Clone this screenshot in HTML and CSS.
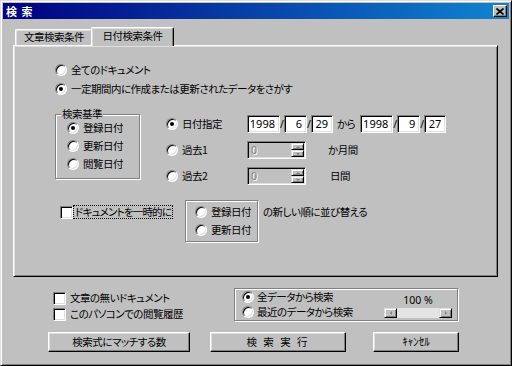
FILE: index.html
```html
<!DOCTYPE html>
<html lang="ja">
<head>
<meta charset="utf-8">
<title>検索</title>
<link rel="stylesheet" href="styles.css">
</head>
<body>
<div class="window">
  <div class="titlebar">
    <span class="title">検 索</span>
    <span class="close"><svg width="8" height="7" viewBox="0 0 8 7"><path d="M0.5 0.5L7.5 6.5M7.5 0.5L0.5 6.5" stroke="#000" stroke-width="1.7" fill="none"/></svg></span>
  </div>
  <div class="body">
    <div class="tabs">
      <div class="tab">文章検索条件</div>
      <div class="tab active">日付検索条件</div>
    </div>
    <div class="panel">
      <div class="opt r1"><span class="radio"></span>全てのドキュメント</div>
      <div class="opt r2"><span class="radio on"></span>一定期間内に作成または更新されたデータをさがす</div>
      <div class="criteria">
        <fieldset class="group basis">
          <legend>検索基準</legend>
          <div class="optlist">
            <div class="opt"><span class="radio on"></span>登録日付</div>
            <div class="opt"><span class="radio"></span>更新日付</div>
            <div class="opt"><span class="radio"></span>閲覧日付</div>
          </div>
        </fieldset>
        <div class="dates">
          <div class="opt"><span class="radio on"></span>日付指定</div>
          <div class="fields">
            <span class="edit w4">1998</span><span class="slash">/</span><span class="edit w2">6</span><span class="slash">/</span><span class="edit w2b">29</span>
            <span class="kara">から</span>
            <span class="edit w4">1998</span><span class="slash">/</span><span class="edit w2">9</span><span class="slash">/</span><span class="edit w2b">27</span>
          </div>
          <div class="opt"><span class="radio"></span>過去1</div>
          <div class="fields">
            <span class="spin"><span class="spin-val">0</span><span class="spin-btns"><span class="sb up"></span><span class="sb down"></span></span></span>
            <span class="unit">か月間</span>
          </div>
          <div class="opt"><span class="radio"></span>過去2</div>
          <div class="fields">
            <span class="spin"><span class="spin-val">0</span><span class="spin-btns"><span class="sb up"></span><span class="sb down"></span></span></span>
            <span class="unit unit2">日間</span>
          </div>
        </div>
      </div>
      <div class="sortrow">
        <div class="opt tmp"><span class="check"></span><span class="focus">ドキュメントを一時的に</span></div>
        <div class="group sortgroup">
          <div class="opt"><span class="radio"></span>登録日付</div>
          <div class="opt"><span class="radio"></span>更新日付</div>
        </div>
        <div class="sorttext">の新しい順に並び替える</div>
      </div>
    </div>
    <div class="bottom">
      <div class="checks">
        <div class="opt"><span class="check"></span>文章の無いドキュメント</div>
        <div class="opt"><span class="check"></span>このパソコンでの閲覧履歴</div>
      </div>
      <div class="group scope">
        <div class="scope-opts">
          <div class="opt"><span class="radio on"></span>全データから検索</div>
          <div class="opt"><span class="radio"></span>最近のデータから検索</div>
        </div>
        <div class="scope-right">
          <div class="pct">100 %</div>
          <div class="scroll"><span class="sbtn left"></span><span class="trough"></span><span class="sbtn right"></span></div>
        </div>
      </div>
    </div>
    <div class="buttons">
      <div class="btn b1">検索式にマッチする数</div>
      <div class="btn b2">検 索 実 行</div>
      <div class="btn b3">ｷｬﾝｾﾙ</div>
    </div>
  </div>
</div>
</body>
</html>
```
FILE: styles.css
```css
* { box-sizing: border-box; margin: 0; padding: 0; }
body {
  margin: 0;
  background: #c0c0c0;
  font-family: "Noto Sans CJK JP", "Noto Sans", sans-serif;
  font-size: 10.5px;
  letter-spacing: -0.5px;
  line-height: 14px;
  color: #000;
  font-feature-settings: "palt";
}
.window {
  width: 512px;
  height: 366px;
  background: #c0c0c0;
  border: 1px solid;
  border-color: #dfdfdf #000 #000 #dfdfdf;
  box-shadow: inset 1px 1px #fff, inset -1px -1px #808080;
  padding: 2px;
  display: flex;
  flex-direction: column;
}
.titlebar {
  height: 16px;
  background: linear-gradient(to right, #000080, #1084d0);
  display: flex;
  align-items: center;
  justify-content: space-between;
  padding: 0 2px 0 3px;
}
.title { color: #fff; font-weight: bold; font-size: 11px; letter-spacing: 1px; }
.close {
  width: 14px;
  height: 12px;
  background: #c0c0c0;
  border: 1px solid;
  border-color: #fff #000 #000 #fff;
  box-shadow: inset -1px -1px #808080;
  display: flex;
  align-items: center;
  justify-content: center;
}
.close svg { display: block; }
.body { padding: 8px 0 0 10px; display: flex; flex-direction: column; }
.tabs { display: flex; align-items: flex-end; height: 18px; padding-left: 2px; }
.tab {
  width: 78px;
  height: 16px;
  border: 1px solid;
  border-color: #fff #000 transparent #fff;
  border-bottom: none;
  border-radius: 2px 2px 0 0;
  box-shadow: inset -1px 0 #808080, inset 1px 1px #dfdfdf;
  text-align: center;
  line-height: 14px;
  background: #c0c0c0;
}
.tab.active {
  width: 83px;
  height: 19px;
  margin-left: -2px;
  margin-bottom: -1px;
  line-height: 15px;
  position: relative;
  z-index: 1;
}
.panel {
  width: 485px;
  height: 232px;
  border: 1px solid;
  border-color: #fff #000 #000 #fff;
  box-shadow: inset 1px 1px #dfdfdf, inset -1px -1px #808080;
  padding-top: 17px;
  display: flex;
  flex-direction: column;
}
.opt { display: flex; align-items: center; gap: 4px; height: 14px; white-space: nowrap; }
.radio {
  width: 12px;
  height: 12px;
  flex: none;
  border-radius: 50%;
  background: #fff;
  border: 1px solid;
  border-color: #808080 #fff #fff #808080;
  box-shadow: inset 1px 1px #000, inset -1px -1px #dfdfdf;
  display: flex;
  align-items: center;
  justify-content: center;
}
.radio.on::after { content: ""; width: 4px; height: 4px; border-radius: 50%; background: #000; }
.check {
  width: 13px;
  height: 13px;
  flex: none;
  background: #fff;
  border: 1px solid;
  border-color: #808080 #fff #fff #808080;
  box-shadow: inset 1px 1px #000, inset -1px -1px #dfdfdf;
}
.r1 { margin-left: 41px; }
.r2 { margin-left: 41px; margin-top: 5px; }
.group {
  border: 1px solid #808080;
  box-shadow: inset 1px 1px #fff, 1px 1px #fff;
}
.criteria { display: flex; align-items: flex-start; margin: 11px 0 0 41px; }
.basis { width: 85px; padding: 0 0 7px 5px; }
.basis legend { padding: 0 1px; line-height: 14px; background: #c0c0c0; }
.optlist { display: flex; flex-direction: column; gap: 4px; margin-left: 6px; }
.dates {
  margin: 8px 0 0 26px;
  display: grid;
  grid-template-columns: 81px auto;
  grid-auto-rows: 18px;
  row-gap: 8px;
  align-items: center;
}
.fields { display: flex; align-items: center; height: 18px; }
.edit {
  height: 18px;
  background: #fff;
  border: 1px solid;
  border-color: #808080 #fff #fff #808080;
  box-shadow: inset 1px 1px #000, inset -1px -1px #dfdfdf;
  text-align: right;
  padding: 1px 4px 0 0;
  line-height: 14px;
  font-family: "Noto Sans", sans-serif;
  font-size: 11px;
  letter-spacing: 0;
}
.w4 { width: 33px; }
.w2 { width: 23px; }
.w2b { width: 22px; }
.slash { width: 4px; text-align: center; font-family: "Noto Sans", sans-serif; letter-spacing: 0; }
.kara { margin: 0 5px 0 4px; }
.spin {
  width: 59px;
  height: 18px;
  display: flex;
  border: 1px solid;
  border-color: #808080 #fff #fff #808080;
  box-shadow: inset 1px 1px #000, inset -1px -1px #dfdfdf;
  padding: 1px;
  background: #c0c0c0;
}
.spin-val {
  flex: 1;
  color: #808080;
  text-shadow: 1px 1px #fff;
  padding-left: 2px;
  line-height: 14px;
  font-family: "Noto Sans", sans-serif;
  letter-spacing: 0;
}
.spin-btns { width: 13px; display: flex; flex-direction: column; }
.sb {
  flex: 1;
  border: 1px solid;
  border-color: #dfdfdf #000 #000 #dfdfdf;
  box-shadow: inset 1px 1px #fff, inset -1px -1px #808080;
  display: flex;
  align-items: center;
  justify-content: center;
}
.sb::after { content: ""; border-left: 2px solid transparent; border-right: 2px solid transparent; }
.sb.up::after { border-bottom: 2px solid #808080; }
.sb.down::after { border-top: 2px solid #808080; }
.unit { margin-left: 22px; }
.unit2 { margin-left: 24px; }
.sortrow { display: flex; align-items: flex-start; margin: 15px 0 0 46px; }
.tmp { margin-top: 5px; gap: 0; }
.focus { border: 1px dotted #000; width: 100px; height: 14px; line-height: 12px; padding-left: 1px; letter-spacing: -0.8px; }
.sortgroup {
  width: 73px;
  height: 42px;
  margin-left: 12px;
  padding: 4px 0 0 9px;
  display: flex;
  flex-direction: column;
  gap: 4px;
}
.sorttext { margin: 5px 0 0 5px; }
.bottom { display: flex; align-items: flex-start; margin-top: 11px; }
.checks { width: 181px; margin-left: 40px; padding-top: 3px; display: flex; flex-direction: column; gap: 2px; }
.scope { width: 224px; height: 33px; display: flex; padding: 1px 5px 0 7px; }
.scope-opts { display: flex; flex-direction: column; gap: 1px; }
.scope-opts .opt { gap: 3px; }
.scope-right { margin-left: auto; display: flex; flex-direction: column; align-items: center; padding-top: 3px; }
.pct { font-family: "Noto Sans", sans-serif; line-height: 14px; letter-spacing: 0; }
.scroll { width: 68px; height: 10px; display: flex; margin-top: 1px; }
.sbtn {
  width: 13px;
  height: 10px;
  background: #c0c0c0;
  border: 1px solid;
  border-color: #dfdfdf #000 #000 #dfdfdf;
  box-shadow: inset 1px 1px #fff, inset -1px -1px #808080;
  display: flex;
  align-items: center;
  justify-content: center;
}
.sbtn::after { content: ""; border-top: 2px solid transparent; border-bottom: 2px solid transparent; }
.sbtn.left::after { border-right: 2px solid #808080; }
.sbtn.right::after { border-left: 2px solid #808080; }
.trough { flex: 1; background: #e4e4e4; }
.buttons { display: flex; margin: 11px 0 0 35px; }
.btn {
  height: 20px;
  border: 1px solid;
  border-color: #fff #000 #000 #fff;
  box-shadow: inset -1px -1px #808080, inset 1px 1px #dfdfdf;
  text-align: center;
  line-height: 17px;
}
.b1 { width: 142px; }
.b2 { width: 136px; margin-left: 20px; letter-spacing: 2px; }
.b3 { width: 86px; margin-left: 27px; letter-spacing: 0; font-size: 11px; }
```
